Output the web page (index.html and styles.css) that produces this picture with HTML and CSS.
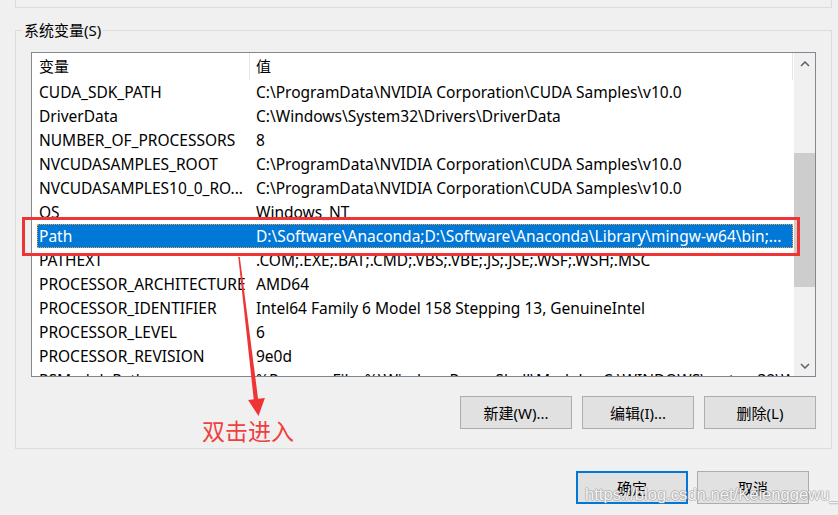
FILE: index.html
```html
<!DOCTYPE html>
<html lang="zh-CN">
<head>
<meta charset="utf-8">
<title>系统变量</title>
<link rel="stylesheet" href="styles.css">
</head>
<body>
<div class="prev"></div>
<fieldset class="group">
  <legend>系统变量(S)</legend>
  <div class="lv">
    <div class="lv-body">
      <div class="lv-head"><div>变量</div><div>值</div></div>
      <div class="row"><div class="cells"><span>CUDA_SDK_PATH</span><span>C:\ProgramData\NVIDIA Corporation\CUDA Samples\v10.0</span></div></div>
      <div class="row"><div class="cells"><span>DriverData</span><span>C:\Windows\System32\Drivers\DriverData</span></div></div>
      <div class="row"><div class="cells"><span>NUMBER_OF_PROCESSORS</span><span>8</span></div></div>
      <div class="row"><div class="cells"><span>NVCUDASAMPLES_ROOT</span><span>C:\ProgramData\NVIDIA Corporation\CUDA Samples\v10.0</span></div></div>
      <div class="row"><div class="cells"><span>NVCUDASAMPLES10_0_RO...</span><span>C:\ProgramData\NVIDIA Corporation\CUDA Samples\v10.0</span></div></div>
      <div class="row"><div class="cells"><span>OS</span><span>Windows_NT</span></div></div>
      <div class="row sel"><div class="cells"><span>Path</span><span>D:\Software\Anaconda;D:\Software\Anaconda\Library\mingw-w64\bin;...</span></div></div>
      <div class="row"><div class="cells"><span>PATHEXT</span><span>.COM;.EXE;.BAT;.CMD;.VBS;.VBE;.JS;.JSE;.WSF;.WSH;.MSC</span></div></div>
      <div class="row"><div class="cells"><span>PROCESSOR_ARCHITECTURE</span><span>AMD64</span></div></div>
      <div class="row"><div class="cells"><span>PROCESSOR_IDENTIFIER</span><span>Intel64 Family 6 Model 158 Stepping 13, GenuineIntel</span></div></div>
      <div class="row"><div class="cells"><span>PROCESSOR_LEVEL</span><span>6</span></div></div>
      <div class="row"><div class="cells"><span>PROCESSOR_REVISION</span><span>9e0d</span></div></div>
      <div class="row"><div class="cells"><span>PSModulePath</span><span>%ProgramFiles%\WindowsPowerShell\Modules;C:\WINDOWS\system32\WindowsPowerShell\v1.0\Modules</span></div></div>
    </div>
    <div class="sb">
      <div class="sb-btn"><svg width="10" height="6" viewBox="0 0 10 6"><polyline points="1,5 5,1 9,5" fill="none" stroke="#606060" stroke-width="1.5"/></svg></div>
      <div class="sb-track"><div class="thumb"></div></div>
      <div class="sb-btn"><svg width="10" height="6" viewBox="0 0 10 6"><polyline points="1,1 5,5 9,1" fill="none" stroke="#606060" stroke-width="1.5"/></svg></div>
    </div>
  </div>
  <div class="actions">
    <button class="btn">新建(W)...</button>
    <button class="btn">编辑(I)...</button>
    <button class="btn">删除(L)</button>
  </div>
</fieldset>
<div class="footer">
  <button class="btn default">确定</button>
  <button class="btn">取消</button>
</div>

<div class="redbox"></div>
<svg class="arrow" width="45" height="170" viewBox="230 250 45 170">
  <polygon points="238.3,257 239.8,257 258.2,399.7 253.8,400.3" fill="#ee3434"/>
  <polygon points="248.1,400 264.9,398 258.5,416" fill="#ee3434"/>
</svg>
<div class="note">双击进入</div>
<div class="wm">https://blog.csdn.net/Keienggewu_</div>
</body>
</html>
```
FILE: styles.css
```css
html, body {
  margin: 0;
  padding: 0;
}
body {
  width: 838px;
  height: 515px;
  overflow: hidden;
  position: relative;
  background: #f0f0f0;
  color: #000;
  font-family: "Noto Sans", "Noto Sans CJK SC", sans-serif;
  font-size: 15px;
}
.prev {
  height: 7px;
  margin: 0 6px 0 15px;
  border: 1px solid #dcdcdc;
  border-top: none;
}
.group {
  margin: 12px 6px 0 15px;
  padding: 0 15px 19px;
  border: 1px solid #dcdcdc;
  min-width: 0;
}
.group legend {
  margin-left: -9px;
  padding: 0 2px;
  line-height: 20px;
  font-size: 15px;
}
.lv {
  margin-top: 12px;
  height: 325px;
  box-sizing: border-box;
  border: 1px solid #828790;
  background: #fff;
  display: flex;
}
.lv-body {
  flex: 1;
  min-width: 0;
  overflow: hidden;
}
.lv-head {
  display: grid;
  grid-template-columns: 218px 543px;
  height: 27px;
  line-height: 27px;
}
.lv-head div {
  border-right: 1px solid #e5e5e5;
  padding-left: 6px;
}
.lv-head div:first-child {
  padding-left: 7px;
}
.row {
  height: 24px;
  padding: 0 1px 0 5px;
}
.cells {
  display: grid;
  grid-template-columns: 212px 1fr;
  height: 24px;
  box-sizing: border-box;
  border: 1px dotted transparent;
  font-size: 15.5px;
  line-height: 22px;
  white-space: nowrap;
}
.cells span {
  overflow: hidden;
  padding-left: 6px;
}
.cells span:first-child {
  padding-left: 1px;
}
.row.sel .cells {
  background: #0078d7;
  color: #fff;
  border-color: #f5a040;
}
.sb {
  width: 21px;
  background: #f0f0f0;
  display: flex;
  flex-direction: column;
}
.sb-btn {
  height: 21px;
  display: flex;
  align-items: center;
  justify-content: center;
}
.sb-track {
  flex: 1;
  padding-top: 79px;
}
.thumb {
  height: 134px;
  background: #cdcdcd;
}
.actions {
  display: flex;
  justify-content: flex-end;
  gap: 10px;
  margin-top: 19px;
}
.btn {
  width: 112px;
  height: 33px;
  box-sizing: border-box;
  padding: 0;
  background: #e1e1e1;
  border: 1px solid #adadad;
  font: inherit;
  color: #000;
  display: flex;
  align-items: center;
  justify-content: center;
}
.btn.default {
  border: 2px solid #0078d7;
}
.footer {
  display: flex;
  justify-content: flex-end;
  gap: 9px;
  margin: 22px 29px 0 0;
}
.redbox {
  position: absolute;
  left: 22px;
  top: 217px;
  width: 778px;
  height: 39px;
  box-sizing: border-box;
  border: 3px solid #ee3434;
}
.arrow {
  position: absolute;
  left: 230px;
  top: 250px;
}
.note {
  position: absolute;
  left: 202px;
  top: 416px;
  font-family: "Noto Sans CJK SC", sans-serif;
  font-size: 23px;
  line-height: 28px;
  color: #ef4040;
}
.wm {
  position: absolute;
  left: 585px;
  top: 486px;
  font-family: "Liberation Sans", sans-serif;
  font-size: 16.6px;
  line-height: 18px;
  color: rgba(255, 255, 255, 0.9);
  text-shadow: 1px 0 0 rgba(140, 140, 140, 0.45), -1px 0 0 rgba(140, 140, 140, 0.45), 0 1px 0 rgba(140, 140, 140, 0.45), 0 -1px 0 rgba(140, 140, 140, 0.45);
  white-space: nowrap;
}
```
